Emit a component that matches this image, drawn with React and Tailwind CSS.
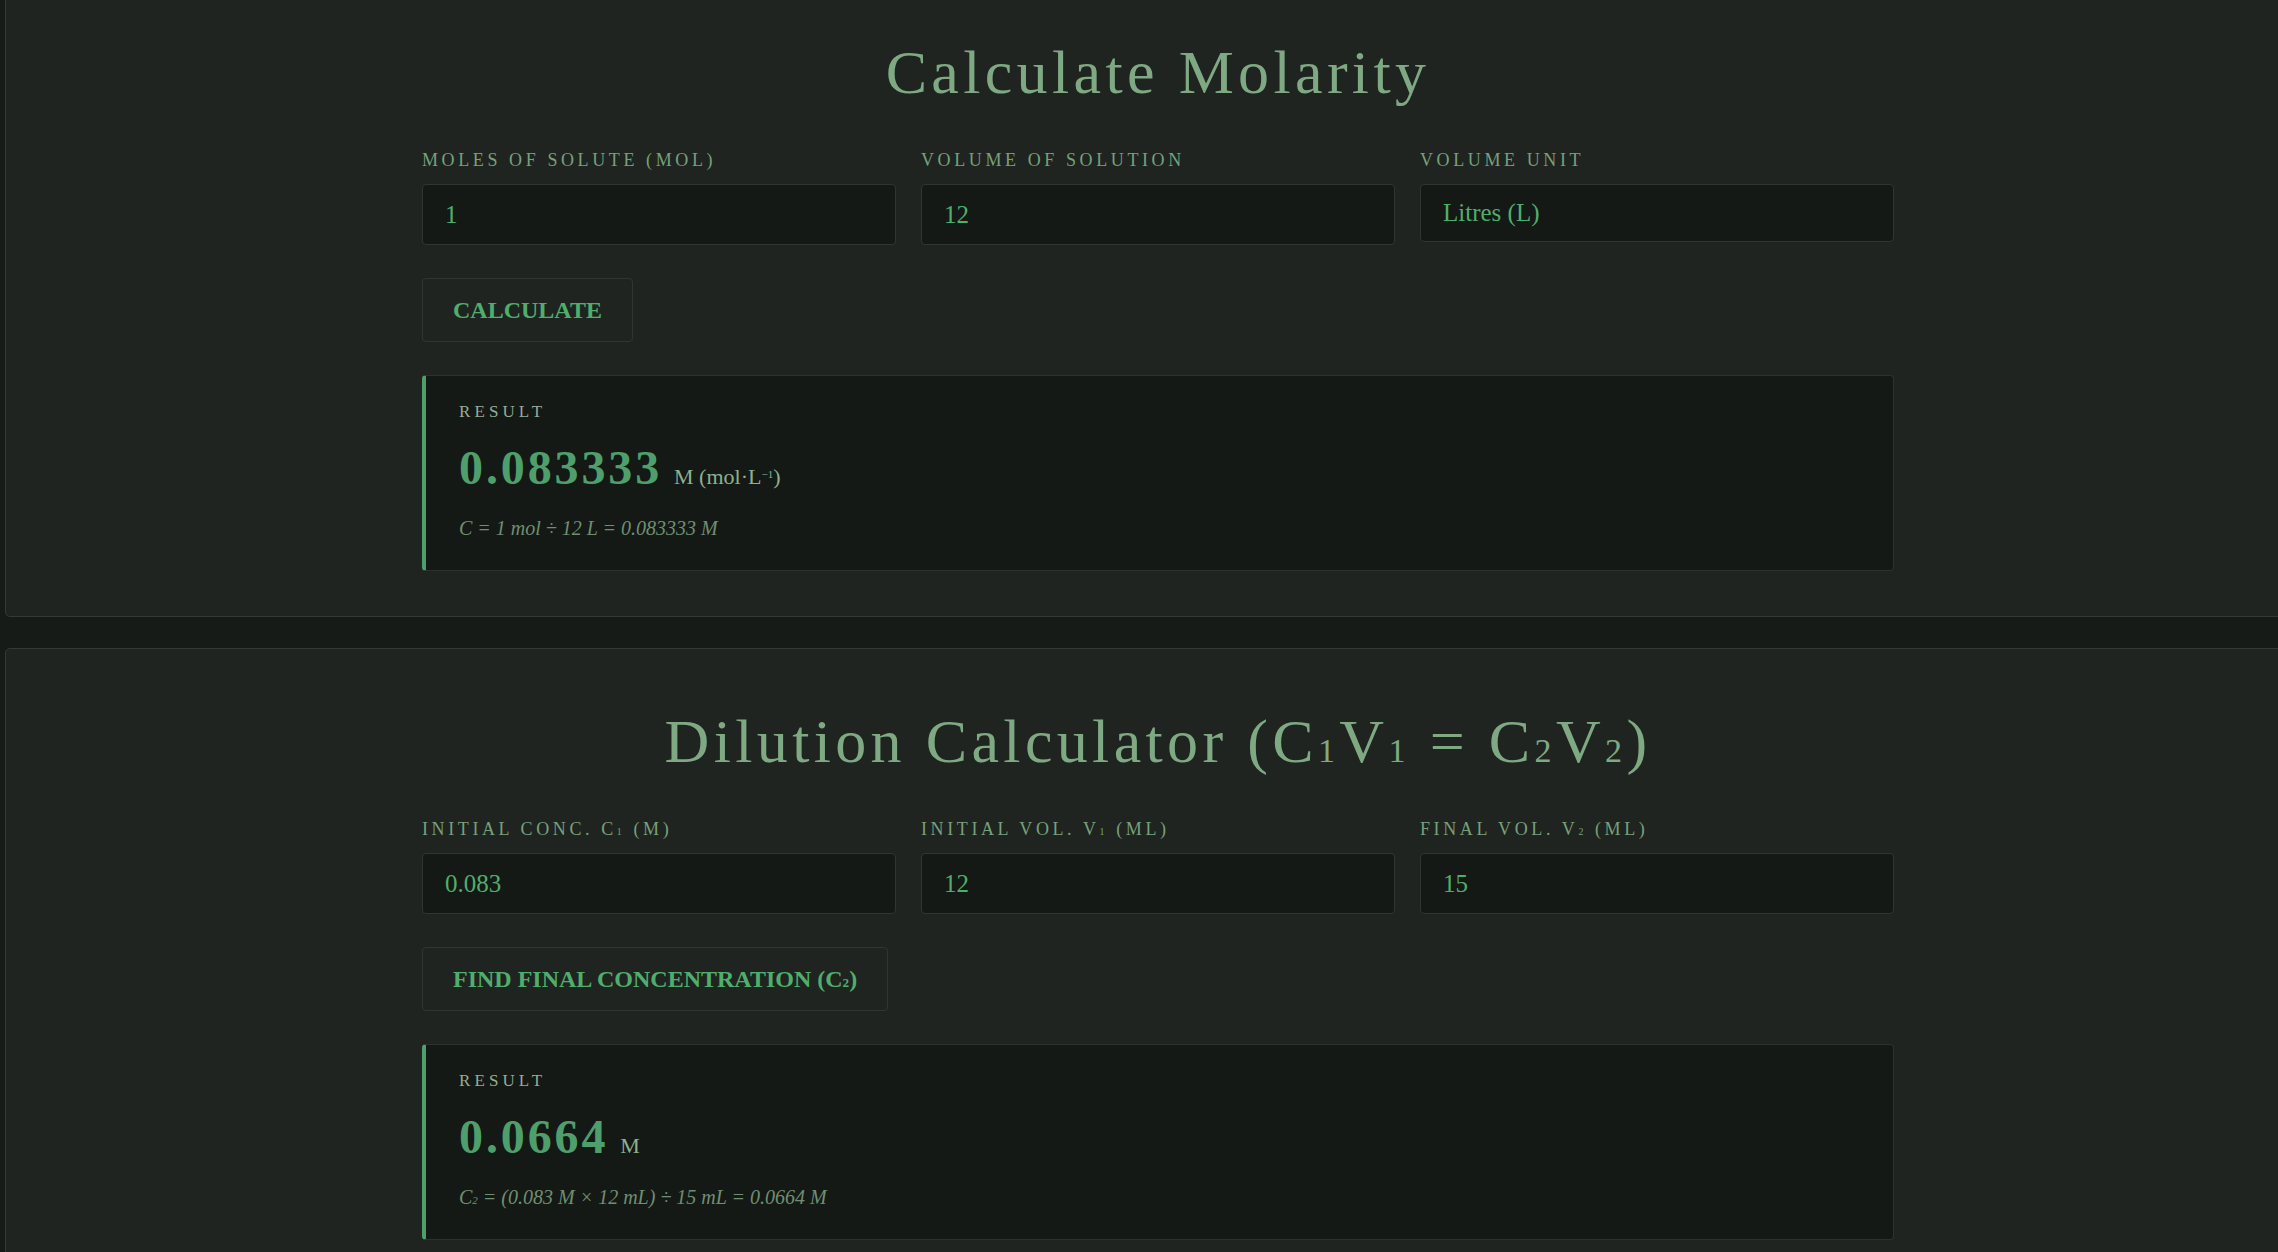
import React from "react";

const serif = { fontFamily: '"Liberation Serif", "DejaVu Serif", serif' };

// small inferior digit, sits on the baseline like the original font's subscripts
const Sub = ({ children }) => <span className="text-[0.55em] leading-none">{children}</span>

const Field = ({ label, value, select }) => {
    return (
        <div className="flex flex-col">
            <label className="mb-[10px] h-[27px] text-[18px] leading-[27px] uppercase tracking-[0.2em] text-[#78a07c]">{label}</label>
            {select ? (
                <select
                    defaultValue={value}
                    className="h-[58px] appearance-none rounded-[4px] border border-[#30362f] bg-[#151915] px-[22px] text-[25px] text-[#4fae6c] outline-none"
                >
                    <option>{value}</option>
                </select>
            ) : (
                <input
                    type="text"
                    defaultValue={value}
                    className="h-[61px] rounded-[4px] border border-[#30362f] bg-[#151915] px-[22px] text-[25px] text-[#4fae6c] outline-none"
                />
            )}
        </div>
    )
}

const Calculator = ({ title, fields, button, value, unit, formula }) => {
    return (
        <section className="w-[2306px] rounded-[5px] border border-[#333a33] bg-[#1f2420] pt-[55px] pb-[45px]">
            <div className="mx-auto max-w-[1472px]">
                <h2 className="mb-[38px] h-[74px] text-center text-[62px] leading-[1.2] tracking-[0.07em] text-[#7ea983]">{title}</h2>
                <div className="grid grid-cols-3 gap-x-[25px]">
                    {fields.map((f, i) => (
                        <Field key={i} label={f.label} value={f.value} select={f.select} />
                    ))}
                </div>
                <button className="mt-[33px] h-[64px] rounded-[4px] border border-[#30362f] px-[30px] text-[24px] font-bold uppercase text-[#4fae6c]">
                    {button}
                </button>
                <div className="mt-[33px] h-[196px] rounded-[4px] border border-l-4 border-[#2c322c] border-l-[#4f9f6c] bg-[#151915] pl-[33px] pt-[23px]">
                    <div className="text-[17px] leading-[25.5px] tracking-[0.24em] text-[#96ad96]">RESULT</div>
                    <div className="mt-[14px] flex items-baseline">
                        <span className="text-[48px] font-bold leading-[1.2] tracking-[0.06em] text-[#4f9f6c]">{value}</span>
                        <span className="ml-[12px] text-[22px] text-[#8fb08f]">{unit}</span>
                    </div>
                    <p className="mt-[17px] h-[30px] text-[20px] italic leading-[30px] text-[#6f8f72]">{formula}</p>
                </div>
            </div>
        </section>
    )
}

export default function App() {
    return (
        <div className="h-screen w-full overflow-hidden bg-[#171b17]" style={serif}>
            <div className="-mt-[21px] flex w-[2320px] flex-col gap-[31px] pl-[5px]">
                <Calculator
                    title="Calculate Molarity"
                    fields={[
                        { label: "Moles of solute (mol)", value: "1" },
                        { label: "Volume of solution", value: "12" },
                        { label: "Volume unit", value: "Litres (L)", select: true },
                    ]}
                    button="Calculate"
                    value="0.083333"
                    unit={<>M (mol·L<sup className="text-[11px]">−1</sup>)</>}
                    formula="C = 1 mol ÷ 12 L = 0.083333 M"
                />
                <Calculator
                    title={<>Dilution Calculator (C<Sub>1</Sub>V<Sub>1</Sub> = C<Sub>2</Sub>V<Sub>2</Sub>)</>}
                    fields={[
                        { label: <>Initial conc. C<Sub>1</Sub> (M)</>, value: "0.083" },
                        { label: <>Initial vol. V<Sub>1</Sub> (mL)</>, value: "12" },
                        { label: <>Final vol. V<Sub>2</Sub> (mL)</>, value: "15" },
                    ]}
                    button={<>Find final concentration (C<Sub>2</Sub>)</>}
                    value="0.0664"
                    unit="M"
                    formula={<>C<Sub>2</Sub> = (0.083 M × 12 mL) ÷ 15 mL = 0.0664 M</>}
                />
            </div>
        </div>
    )
}
